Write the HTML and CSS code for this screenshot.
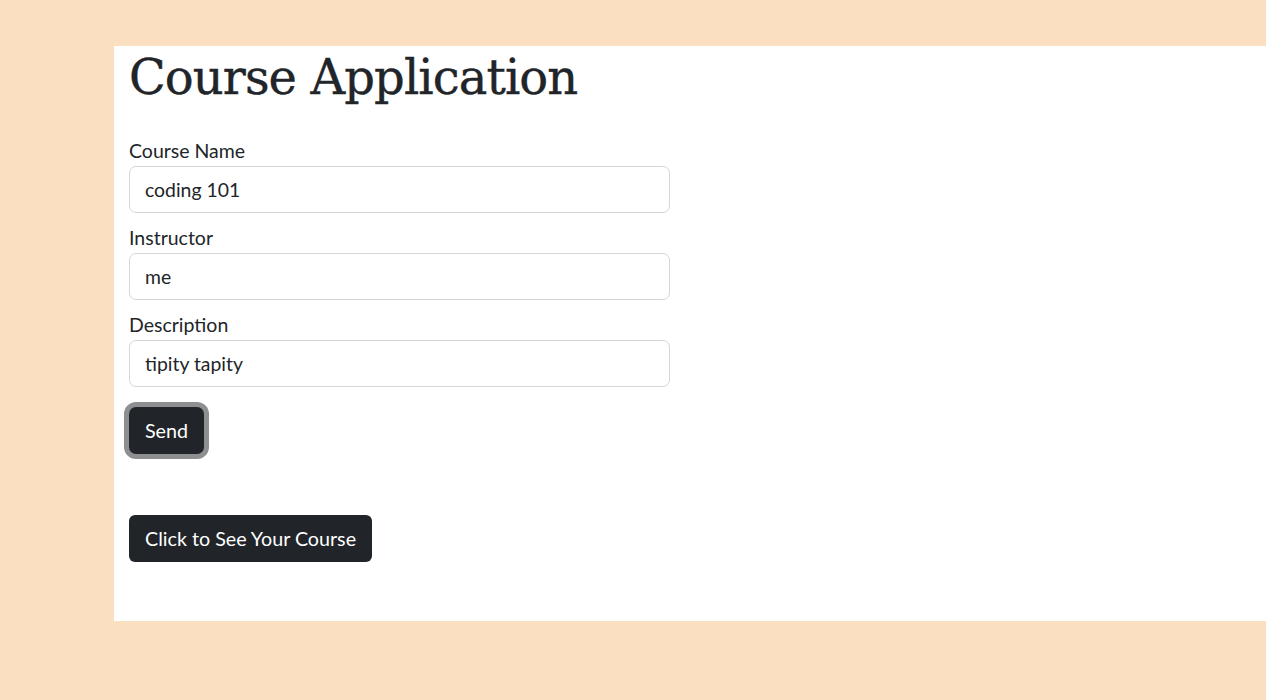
FILE: index.html
```html
<!DOCTYPE html>
<html lang="en">
<head>
<meta charset="utf-8">
<title>Course Application</title>
<link rel="stylesheet" href="styles.css">
</head>
<body>
<main class="panel">
  <h1 class="title">Course Application</h1>
  <form class="form">
    <div class="group">
      <label class="label" for="name">Course Name</label>
      <input class="input" id="name" type="text" value="coding 101">
    </div>
    <div class="group">
      <label class="label" for="instr">Instructor</label>
      <input class="input" id="instr" type="text" value="me">
    </div>
    <div class="group">
      <label class="label" for="desc">Description</label>
      <input class="input" id="desc" type="text" value="tipity tapity">
    </div>
    <button class="btn btn-focus" type="button">Send</button>
  </form>
  <button class="btn btn-see" type="button">Click to See Your Course</button>
</main>
</body>
</html>
```
FILE: styles.css
```css
html, body {
  margin: 0;
  padding: 0;
}
body {
  background: #fadfc1;
  font-family: Lato, "Open Sans", sans-serif;
  color: #212529;
  padding: 46px 0 0 114px;
  height: 700px;
  box-sizing: border-box;
}
.panel {
  background: #fff;
  height: 575px;
  box-sizing: border-box;
  padding: 0 15px;
  display: flex;
  flex-direction: column;
  align-items: flex-start;
}
.title {
  font-family: "DejaVu Serif", serif;
  font-weight: 400;
  font-size: 48px;
  line-height: 58px;
  margin: 0 0 33px 0;
  padding-top: 2px;
  letter-spacing: -0.9px;
  -webkit-text-stroke: 0.4px #212529;
}
.form {
  width: 541px;
  display: flex;
  flex-direction: column;
  align-items: flex-start;
}
.group {
  width: 100%;
  display: flex;
  flex-direction: column;
  margin-bottom: 13px;
}
.label {
  font-size: 19.5px;
  line-height: 23px;
  padding-bottom: 4px;
}
.input {
  font-family: Lato, "Open Sans", sans-serif;
  font-size: 19.4px;
  color: #212529;
  height: 47px;
  box-sizing: border-box;
  padding: 0 15px;
  border: 1px solid #d3d6da;
  border-radius: 7px;
  outline: none;
}
.btn {
  font-family: Lato, "Open Sans", sans-serif;
  font-size: 19.7px;
  color: #fff;
  background: #212529;
  border: none;
  border-radius: 6px;
  height: 47px;
  padding: 0 16px;
}
.btn-focus {
  margin-top: 7px;
  box-shadow: 0 0 0 5px #8e8f90;
  border-radius: 7px;
}
.btn-see {
  margin-top: 61px;
}
```
